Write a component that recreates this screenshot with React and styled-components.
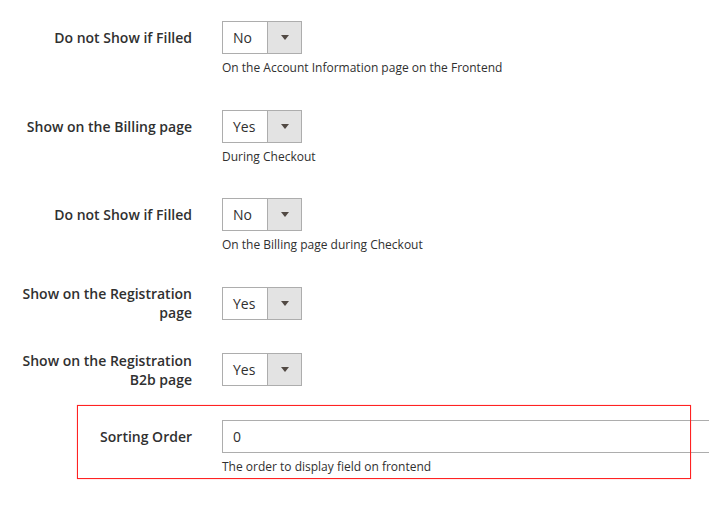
import React from "react";
import styled, { createGlobalStyle } from "styled-components";

const GlobalStyle = createGlobalStyle`
	html, body {
		margin: 0;
		padding: 0;
		background: #fff;
		overflow: hidden;
	}
	body {
		font-family: "Open Sans", "Liberation Sans", sans-serif;
		color: #303030;
	}
`;

const fields = [
	{ label: "Do not Show if Filled", value: "No", note: "On the Account Information page on the Frontend" },
	{ label: "Show on the Billing page", value: "Yes", note: "During Checkout" },
	{ label: "Do not Show if Filled", value: "No", note: "On the Billing page during Checkout" },
	{ label: "Show on the Registration page", value: "Yes" },
	{ label: "Show on the Registration B2b page", value: "Yes" },
];

const App = () => {
	return (
		<>
			<GlobalStyle />
			<Form>
				{fields.map((f, i) => (
					<Field key={i}>
						<Label>
							<span>{f.label}</span>
						</Label>
						<Select>
							<SelectValue>{f.value}</SelectValue>
							<SelectArrow>
								<Triangle />
							</SelectArrow>
						</Select>
						{f.note && <Note>{f.note}</Note>}
					</Field>
				))}
				<Field>
					<Highlight />
					<Label>
						<span>Sorting Order</span>
					</Label>
					<Input defaultValue="0" />
					<Note>The order to display field on frontend</Note>
				</Field>
			</Form>
		</>
	);
};

const Form = styled.div`
	display: flex;
	flex-direction: column;
	gap: 33.5px;
	padding: 21px 0 30px;
	width: 709px;
	overflow: hidden;
`;

const Field = styled.div`
	position: relative;
	display: grid;
	grid-template-columns: 192px 1fr;
	grid-template-rows: 33px auto;
	column-gap: 30px;
`;

const Highlight = styled.div`
	position: absolute;
	left: 77px;
	top: -15px;
	width: 612px;
	height: 72px;
	border: 1px solid #f22;
	box-shadow: 0 0 1px rgba(255, 0, 0, 0.45);
	pointer-events: none;
`;

const Label = styled.label`
	grid-column: 1;
	grid-row: 1;
	height: 33px;
	display: flex;
	align-items: center;
	justify-content: flex-end;
	padding-left: 12px;
	text-align: right;
	font-size: 14px;
	font-weight: 600;
	line-height: 19px;
	color: #303030;
`;

const Select = styled.div`
	grid-column: 2;
	grid-row: 1;
	display: flex;
	width: 78px;
	height: 31px;
	border: 1px solid #adadad;
	background: #fff;
`;

const SelectValue = styled.span`
	flex: 1;
	padding-left: 10px;
	font-size: 14px;
	line-height: 31px;
	color: #303030;
`;

const SelectArrow = styled.span`
	width: 33px;
	display: flex;
	align-items: center;
	justify-content: center;
	background: #e3e3e3;
	border-left: 1px solid #adadad;
`;

const Triangle = styled.span`
	width: 0;
	height: 0;
	border-left: 4px solid transparent;
	border-right: 4px solid transparent;
	border-top: 5px solid #514943;
`;

const Input = styled.input`
	grid-column: 2;
	grid-row: 1;
	box-sizing: border-box;
	width: 520px;
	height: 33px;
	border: 1px solid #adadad;
	padding: 0 10px;
	font-family: "Open Sans", "Liberation Sans", sans-serif;
	font-size: 14px;
	color: #303030;
	outline: none;
`;

const Note = styled.div`
	grid-column: 2;
	grid-row: 2;
	margin-top: 5px;
	font-size: 12px;
	line-height: 17px;
	color: #303030;
`;

export default App;
